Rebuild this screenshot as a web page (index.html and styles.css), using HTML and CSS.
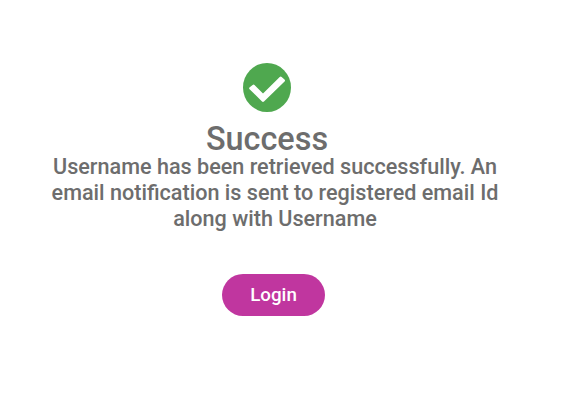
FILE: index.html
```html
<!DOCTYPE html>
<html lang="en">
<head>
<meta charset="utf-8">
<title>Success</title>
<link rel="stylesheet" href="styles.css">
</head>
<body>
<main class="result">
<svg class="icon" viewBox="0 0 48 49" aria-hidden="true"><ellipse class="disc" cx="24" cy="24.5" rx="24" ry="24.5"/><path class="check" d="M7.6 25.3L20 37.5L40.6 17.6L37.7 14.9L20 32.4L10.5 23Z"/></svg>
<h1 class="title">Success</h1>
<p class="message">Username has been retrieved successfully. An<br>email notification is sent to registered email Id<br>along with Username</p>
<button class="login" type="button">Login</button>
</main>
</body>
</html>
```
FILE: styles.css
```css
body {
  margin: 0;
  background: #fff;
  font-family: Roboto, sans-serif;
  color: #6d6d6d;
}
.result {
  width: 550px;
  padding-top: 63px;
  display: flex;
  flex-direction: column;
  align-items: center;
}
.icon {
  width: 48px;
  height: 49px;
  margin-right: 16px;
}
.disc {
  fill: #4fa84f;
}
.check {
  fill: #fff;
  stroke: #fff;
  stroke-width: 2.8;
  stroke-linejoin: round;
}
.title {
  margin: 10px 16px 0 0;
  font-size: 32.4px;
  line-height: 34px;
  font-weight: 500;
}
.message {
  margin: -2px 0 0;
  font-size: 21.6px;
  line-height: 26px;
  font-weight: 500;
  text-align: center;
  white-space: nowrap;
}
.login {
  width: 103px;
  height: 42px;
  margin: 42px 3px 0 0;
  padding: 0 0 1px;
  border: 0;
  border-radius: 21px;
  background: #c0369f;
  color: #fff;
  font: 500 18.8px Roboto, sans-serif;
}
```
